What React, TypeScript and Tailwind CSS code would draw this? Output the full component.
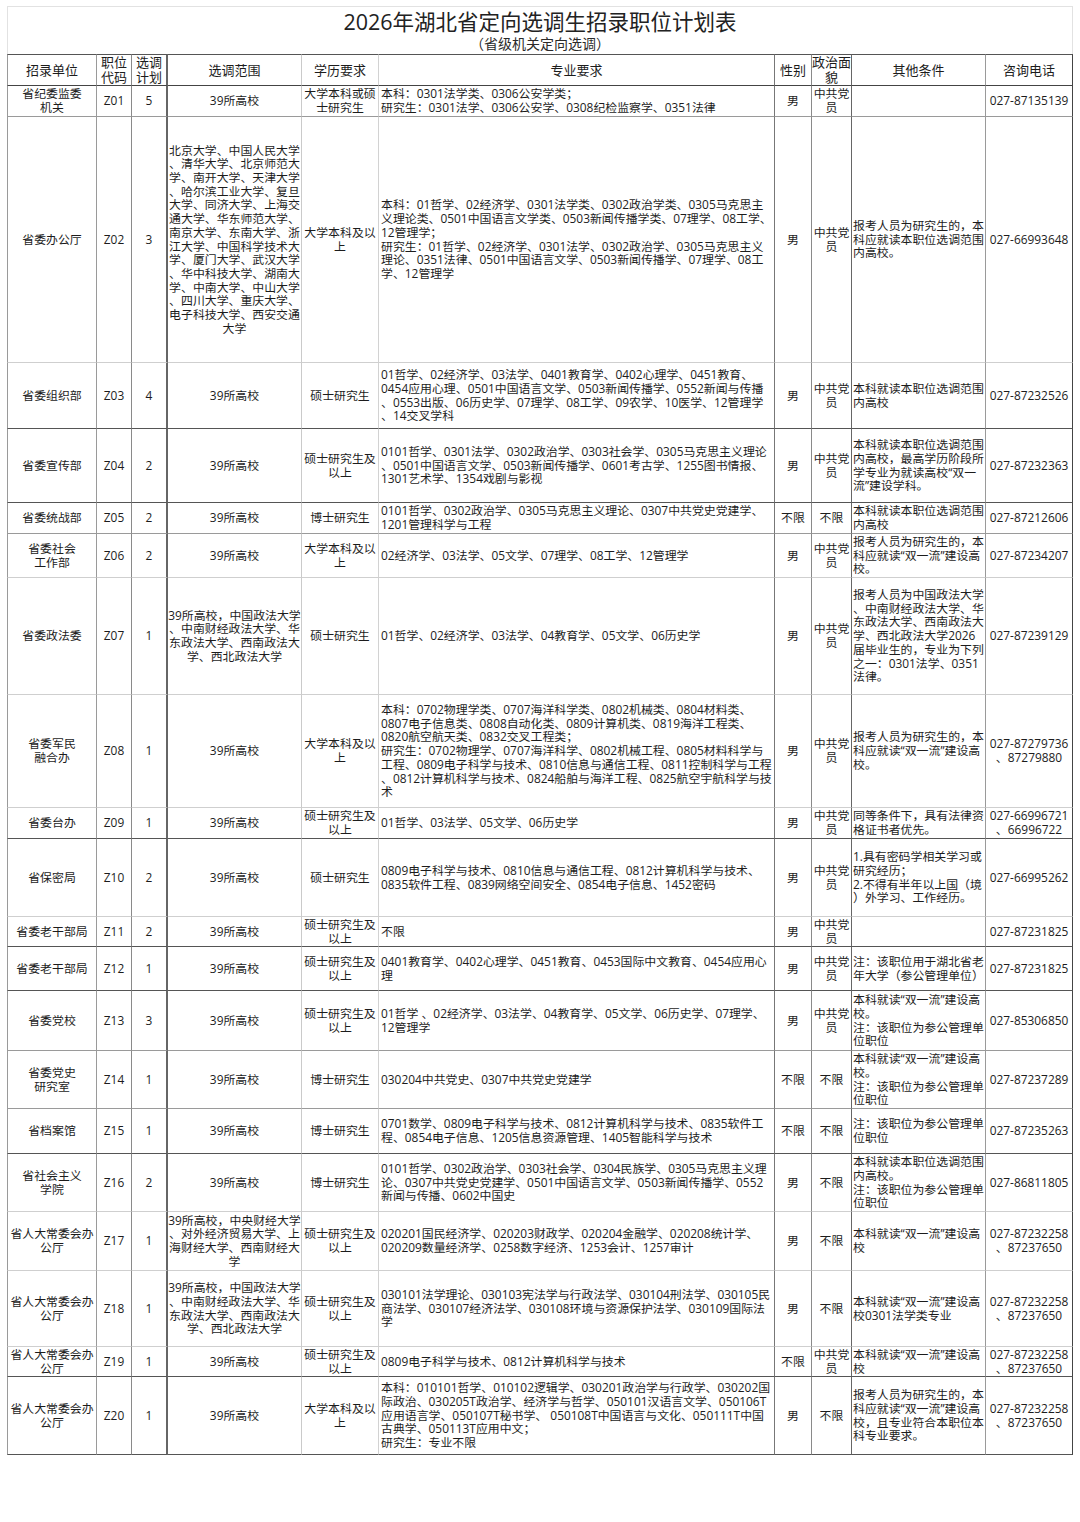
import React from 'react';

type Row = {
  unit: string[];
  code: string;
  plan: string;
  range: string[];
  edu: string[];
  major: string[];
  sex: string;
  pol: string[];
  other: string[];
  phone: string[];
  h: string;
  b: string;
};

const DARK = 'border-b border-b-[#555]';
const MID = 'border-b border-b-[#9a9a9a]';
const LIGHT = 'border-b border-b-[#cfcfcf]';

const P = ['中共党', '员'];
const U = ['省人大常委会办', '公厅'];
const MS = ['硕士研究生及', '以上'];
const BK = ['大学本科及以', '上'];
const T2 = ['027-87232258', '、87237650'];

const rows: Row[] = [
  {
    unit: ['省纪委监委', '机关'], code: 'Z01', plan: '5', range: ['39所高校'], edu: ['大学本科或硕', '士研究生'],
    major: ['本科：0301法学类、0306公安学类；', '研究生：0301法学、0306公安学、0308纪检监察学、0351法律'],
    sex: '男', pol: P, other: [], phone: ['027-87135139'], h: 'h-[31px]', b: MID,
  },
  {
    unit: ['省委办公厅'], code: 'Z02', plan: '3',
    range: ['北京大学、中国人民大学', '、清华大学、北京师范大', '学、南开大学、天津大学', '、哈尔滨工业大学、复旦', '大学、同济大学、上海交', '通大学、华东师范大学、', '南京大学、东南大学、浙', '江大学、中国科学技术大', '学、厦门大学、武汉大学', '、华中科技大学、湖南大', '学、中南大学、中山大学', '、四川大学、重庆大学、', '电子科技大学、西安交通', '大学'],
    edu: BK,
    major: ['本科：01哲学、02经济学、0301法学类、0302政治学类、0305马克思主', '义理论类、0501中国语言文学类、0503新闻传播学类、07理学、08工学、', '12管理学；', '研究生：01哲学、02经济学、0301法学、0302政治学、0305马克思主义', '理论、0351法律、0501中国语言文学、0503新闻传播学、07理学、08工', '学、12管理学'],
    sex: '男', pol: P, other: ['报考人员为研究生的，本', '科应就读本职位选调范围', '内高校。'], phone: ['027-66993648'], h: 'h-[246px]', b: LIGHT,
  },
  {
    unit: ['省委组织部'], code: 'Z03', plan: '4', range: ['39所高校'], edu: ['硕士研究生'],
    major: ['01哲学、02经济学、03法学、0401教育学、0402心理学、0451教育、', '0454应用心理、0501中国语言文学、0503新闻传播学、0552新闻与传播', '、0553出版、06历史学、07理学、08工学、09农学、10医学、12管理学', '、14交叉学科'],
    sex: '男', pol: P, other: ['本科就读本职位选调范围', '内高校'], phone: ['027-87232526'], h: 'h-[66px]', b: DARK,
  },
  {
    unit: ['省委宣传部'], code: 'Z04', plan: '2', range: ['39所高校'], edu: MS,
    major: ['0101哲学、0301法学、0302政治学、0303社会学、0305马克思主义理论', '、0501中国语言文学、0503新闻传播学、0601考古学、1255图书情报、', '1301艺术学、1354戏剧与影视'],
    sex: '男', pol: P, other: ['本科就读本职位选调范围', '内高校，最高学历阶段所', '学专业为就读高校“双一', '流”建设学科。'], phone: ['027-87232363'], h: 'h-[74px]', b: DARK,
  },
  {
    unit: ['省委统战部'], code: 'Z05', plan: '2', range: ['39所高校'], edu: ['博士研究生'],
    major: ['0101哲学、0302政治学、0305马克思主义理论、0307中共党史党建学、', '1201管理科学与工程'],
    sex: '不限', pol: ['不限'], other: ['本科就读本职位选调范围', '内高校'], phone: ['027-87212606'], h: 'h-[31px]', b: MID,
  },
  {
    unit: ['省委社会', '工作部'], code: 'Z06', plan: '2', range: ['39所高校'], edu: BK,
    major: ['02经济学、03法学、05文学、07理学、08工学、12管理学'],
    sex: '男', pol: P, other: ['报考人员为研究生的，本', '科应就读“双一流”建设高', '校。'], phone: ['027-87234207'], h: 'h-[44px]', b: LIGHT,
  },
  {
    unit: ['省委政法委'], code: 'Z07', plan: '1',
    range: ['39所高校，中国政法大学', '、中南财经政法大学、华', '东政法大学、西南政法大', '学、西北政法大学'],
    edu: ['硕士研究生'],
    major: ['01哲学、02经济学、03法学、04教育学、05文学、06历史学'],
    sex: '男', pol: P,
    other: ['报考人员为中国政法大学', '、中南财经政法大学、华', '东政法大学、西南政法大', '学、西北政法大学2026', '届毕业生的，专业为下列', '之一：0301法学、0351', '法律。'],
    phone: ['027-87239129'], h: 'h-[117px]', b: LIGHT,
  },
  {
    unit: ['省委军民', '融合办'], code: 'Z08', plan: '1', range: ['39所高校'], edu: BK,
    major: ['本科：0702物理学类、0707海洋科学类、0802机械类、0804材料类、', '0807电子信息类、0808自动化类、0809计算机类、0819海洋工程类、', '0820航空航天类、0832交叉工程类；', '研究生：0702物理学、0707海洋科学、0802机械工程、0805材料科学与', '工程、0809电子科学与技术、0810信息与通信工程、0811控制科学与工程', '、0812计算机科学与技术、0824船舶与海洋工程、0825航空宇航科学与技', '术'],
    sex: '男', pol: P, other: ['报考人员为研究生的，本', '科应就读“双一流”建设高', '校。'], phone: ['027-87279736', '、87279880'], h: 'h-[113px]', b: LIGHT,
  },
  {
    unit: ['省委台办'], code: 'Z09', plan: '1', range: ['39所高校'], edu: MS,
    major: ['01哲学、03法学、05文学、06历史学'],
    sex: '男', pol: P, other: ['同等条件下，具有法律资', '格证书者优先。'], phone: ['027-66996721', '、66996722'], h: 'h-[31px]', b: DARK,
  },
  {
    unit: ['省保密局'], code: 'Z10', plan: '2', range: ['39所高校'], edu: ['硕士研究生'],
    major: ['0809电子科学与技术、0810信息与通信工程、0812计算机科学与技术、', '0835软件工程、0839网络空间安全、0854电子信息、1452密码'],
    sex: '男', pol: P, other: ['1.具有密码学相关学习或', '研究经历；', '2.不得有半年以上国（境', '）外学习、工作经历。'], phone: ['027-66995262'], h: 'h-[78px]', b: LIGHT,
  },
  {
    unit: ['省委老干部局'], code: 'Z11', plan: '2', range: ['39所高校'], edu: MS,
    major: ['不限'],
    sex: '男', pol: P, other: [], phone: ['027-87231825'], h: 'h-[30px]', b: DARK,
  },
  {
    unit: ['省委老干部局'], code: 'Z12', plan: '1', range: ['39所高校'], edu: MS,
    major: ['0401教育学、0402心理学、0451教育、0453国际中文教育、0454应用心', '理'],
    sex: '男', pol: P, other: ['注：该职位用于湖北省老', '年大学（参公管理单位）'], phone: ['027-87231825'], h: 'h-[44px]', b: DARK,
  },
  {
    unit: ['省委党校'], code: 'Z13', plan: '3', range: ['39所高校'], edu: MS,
    major: ['01哲学 、02经济学、03法学、04教育学、05文学、06历史学、07理学、', '12管理学'],
    sex: '男', pol: P, other: ['本科就读“双一流”建设高', '校。', '注：该职位为参公管理单', '位职位'], phone: ['027-85306850'], h: 'h-[60px]', b: MID,
  },
  {
    unit: ['省委党史', '研究室'], code: 'Z14', plan: '1', range: ['39所高校'], edu: ['博士研究生'],
    major: ['030204中共党史、0307中共党史党建学'],
    sex: '不限', pol: ['不限'], other: ['本科就读“双一流”建设高', '校。', '注：该职位为参公管理单', '位职位'], phone: ['027-87237289'], h: 'h-[58px]', b: MID,
  },
  {
    unit: ['省档案馆'], code: 'Z15', plan: '1', range: ['39所高校'], edu: ['博士研究生'],
    major: ['0701数学、0809电子科学与技术、0812计算机科学与技术、0835软件工', '程、0854电子信息、1205信息资源管理、1405智能科学与技术'],
    sex: '不限', pol: ['不限'], other: ['注：该职位为参公管理单', '位职位'], phone: ['027-87235263'], h: 'h-[45px]', b: DARK,
  },
  {
    unit: ['省社会主义', '学院'], code: 'Z16', plan: '2', range: ['39所高校'], edu: ['博士研究生'],
    major: ['0101哲学、0302政治学、0303社会学、0304民族学、0305马克思主义理', '论、0307中共党史党建学、0501中国语言文学、0503新闻传播学、0552', '新闻与传播、0602中国史'],
    sex: '男', pol: ['不限'], other: ['本科就读本职位选调范围', '内高校。', '注：该职位为参公管理单', '位职位'], phone: ['027-86811805'], h: 'h-[58px]', b: LIGHT,
  },
  {
    unit: U, code: 'Z17', plan: '1',
    range: ['39所高校，中央财经大学', '、对外经济贸易大学、上', '海财经大学、西南财经大', '学'],
    edu: MS,
    major: ['020201国民经济学、020203财政学、020204金融学、020208统计学、', '020209数量经济学、0258数字经济、1253会计、1257审计'],
    sex: '男', pol: ['不限'], other: ['本科就读“双一流”建设高', '校'], phone: T2, h: 'h-[59px]', b: LIGHT,
  },
  {
    unit: U, code: 'Z18', plan: '1',
    range: ['39所高校，中国政法大学', '、中南财经政法大学、华', '东政法大学、西南政法大', '学、西北政法大学'],
    edu: MS,
    major: ['030101法学理论、030103宪法学与行政法学、030104刑法学、030105民', '商法学、030107经济法学、030108环境与资源保护法学、030109国际法', '学'],
    sex: '男', pol: ['不限'], other: ['本科就读“双一流”建设高', '校0301法学类专业'], phone: T2, h: 'h-[76px]', b: LIGHT,
  },
  {
    unit: U, code: 'Z19', plan: '1', range: ['39所高校'], edu: MS,
    major: ['0809电子科学与技术、0812计算机科学与技术'],
    sex: '不限', pol: P, other: ['本科就读“双一流”建设高', '校'], phone: T2, h: 'h-[30px]', b: DARK,
  },
  {
    unit: U, code: 'Z20', plan: '1', range: ['39所高校'], edu: BK,
    major: ['本科：010101哲学、010102逻辑学、030201政治学与行政学、030202国', '际政治、030205T政治学、经济学与哲学、050101汉语言文学、050106T', '应用语言学、050107T秘书学、 050108T中国语言与文化、050111T中国', '古典学、050113T应用中文；', '研究生：专业不限'],
    sex: '男', pol: ['不限'], other: ['报考人员为研究生的，本', '科应就读“双一流”建设高', '校，且专业符合本职位本', '科专业要求。'], phone: T2, h: 'h-[78px]', b: DARK,
  },
];

const colR = [
  'border-l border-l-[#9a9a9a] border-r border-r-[#9a9a9a]',
  'border-r border-r-[#8a8a8a]',
  'border-r-2 border-r-[#666]',
  'border-r border-r-[#cacaca]',
  'border-r border-r-[#d2d2d2]',
  'border-r border-r-[#777]',
  'border-r border-r-[#8a8a8a]',
  'border-r border-r-[#666]',
  'border-r border-r-[#9a9a9a]',
  'border-r border-r-[#444]',
];

const align = [
  'text-center',
  'text-center',
  'text-center',
  'text-center',
  'text-center',
  'text-left pl-[2px]',
  'text-center',
  'text-center',
  'text-left pl-[1px]',
  'text-center',
];

function Lines({ lines }: { lines: string[] }) {
  return (
    <>
      {lines.map((l, i) => (
        <div key={i} className="whitespace-pre">
          {l}
        </div>
      ))}
    </>
  );
}

const headers: string[][] = [
  ['招录单位'],
  ['职位', '代码'],
  ['选调', '计划'],
  ['选调范围'],
  ['学历要求'],
  ['专业要求'],
  ['性别'],
  ['政治面', '貌'],
  ['其他条件'],
  ['咨询电话'],
];

export default function App() {
  return (
    <div
      className="w-[1080px] h-[1522px] bg-white text-[#1c1c1c] overflow-hidden"
      style={{ fontFamily: '"Open Sans", "Noto Sans CJK SC", sans-serif' }}
    >
      <div className="ml-[7px] pt-[6px] w-[1066px]">
        <div className="h-[48px] border border-b-0 border-[#e2e2e2] flex flex-col items-center pt-[2px]">
          <div className="text-[21.5px] leading-[26px] text-[#222]">2026年湖北省定向选调生招录职位计划表</div>
          <div className="text-[14px] leading-[17px] text-[#2a2a2a]">（省级机关定向选调）</div>
        </div>
        <table className="w-[1066px] table-fixed border-separate border-spacing-0 text-[11.9px] leading-[13.7px]">
          <colgroup>
            <col className="w-[90px]" />
            <col className="w-[35px]" />
            <col className="w-[36px]" />
            <col className="w-[134px]" />
            <col className="w-[77px]" />
            <col className="w-[396px]" />
            <col className="w-[37px]" />
            <col className="w-[40px]" />
            <col className="w-[134px]" />
            <col className="w-[87px]" />
          </colgroup>
          <thead>
            <tr className="h-[32px]">
              {headers.map((h, i) => (
                <th
                  key={i}
                  className={`font-normal text-center text-[13px] leading-[15px] p-0 align-middle border-t border-t-[#555] border-b border-b-[#444] ${colR[i]}`}
                >
                  <Lines lines={h} />
                </th>
              ))}
            </tr>
          </thead>
          <tbody>
            {rows.map((r, ri) => {
              const cells: string[][] = [
                r.unit,
                [r.code],
                [r.plan],
                r.range,
                r.edu,
                r.major,
                [r.sex],
                r.pol,
                r.other,
                r.phone,
              ];
              return (
                <tr key={ri} className={r.h}>
                  {cells.map((c, ci) => (
                    <td key={ci} className={`p-0 align-middle ${r.b} ${colR[ci]} ${align[ci]}`}>
                      <Lines lines={c} />
                    </td>
                  ))}
                </tr>
              );
            })}
          </tbody>
        </table>
      </div>
    </div>
  );
}
